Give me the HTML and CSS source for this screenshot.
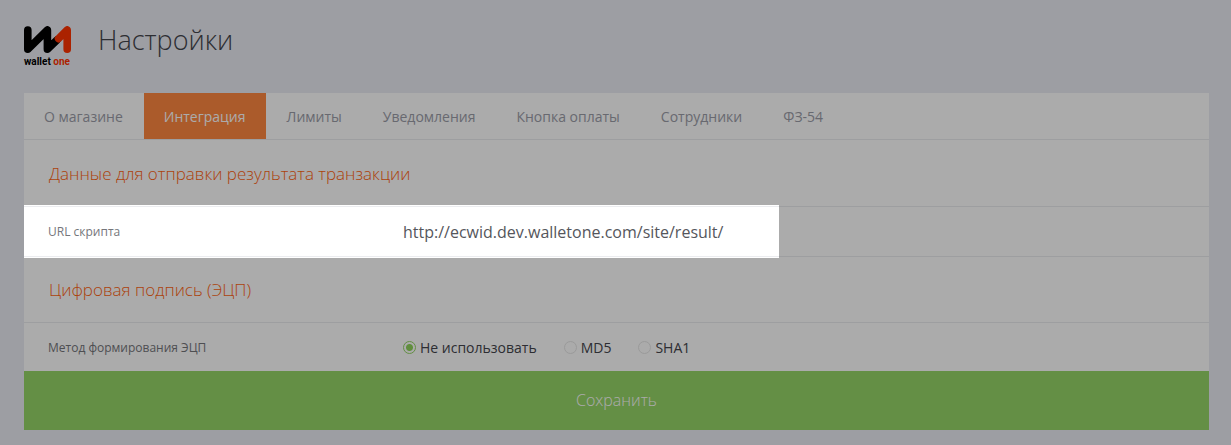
FILE: index.html
```
<!DOCTYPE html>
<html lang="ru">
<head>
  <meta charset="UTF-8">
  <meta name="viewport" content="width=device-width, initial-scale=1">
  <title>Настройки - Wallet One</title>
  <link rel="stylesheet" href="styles.css">
</head>
<body>

  <header class="header">
    <a href="#" class="logo">
      <svg width="47" height="28" viewBox="0 0 47 28" fill="none" stroke-width="7.6" stroke-linecap="round" stroke-linejoin="round" aria-hidden="true">
        <path d="M3.8 4V23.2L23.4 4V23.2L33 14" stroke="#000"/>
        <path d="M34.5 12.6L43.2 4V23.2" stroke="#ff3300"/>
      </svg>
      <span class="logo-text">wallet <span>one</span></span>
    </a>
    <h1>Настройки</h1>
  </header>

  <main class="panel">
    <nav class="tabs">
      <a href="#">О магазине</a>
      <a href="#" class="active">Интеграция</a>
      <a href="#">Лимиты</a>
      <a href="#">Уведомления</a>
      <a href="#">Кнопка оплаты</a>
      <a href="#">Сотрудники</a>
      <a href="#">ФЗ-54</a>
    </nav>

    <form>
      <h2>Данные для отправки результата транзакции</h2>
      <div class="row spotlight">
        <label class="row-label" for="script-url">URL скрипта</label>
        <input type="text" id="script-url" value="http://ecwid.dev.walletone.com/site/result/">
      </div>

      <h2>Цифровая подпись (ЭЦП)</h2>
      <div class="row" role="radiogroup" aria-labelledby="method-label">
        <span class="row-label" id="method-label">Метод формирования ЭЦП</span>
        <div class="options">
          <label><input type="radio" name="method" checked>Не использовать</label>
          <label><input type="radio" name="method">MD5</label>
          <label><input type="radio" name="method">SHA1</label>
        </div>
      </div>

      <button type="submit">Сохранить</button>
    </form>
  </main>

</body>
</html>
```

FILE: styles.css
```
* {
  box-sizing: border-box;
}

body {
  margin: 0;
  padding: 0 22px 15px 24px;
  background: #eaecf3;
  color: #44454c;
  font-family: "Open Sans", "Noto Sans", sans-serif;
  font-size: 14px;
}

.header {
  display: flex;
  align-items: flex-start;
  gap: 27px;
  padding: 20px 0 23px;
}

.logo {
  display: flex;
  flex-direction: column;
  width: 47px;
  padding-top: 6px;
  color: #000;
  text-decoration: none;
}

.logo-text {
  font-family: Roboto, sans-serif;
  font-size: 10px;
  font-weight: 700;
  line-height: 16px;
  white-space: nowrap;
}

.logo-text span {
  color: #ff3300;
}

h1 {
  margin: 0;
  font-size: 27px;
  font-weight: 300;
  line-height: 40px;
}

.panel {
  background: #fff;
}

.tabs {
  display: flex;
  gap: 1px;
  border-bottom: 1px solid #ebecef;
}

.tabs a {
  padding: 1px 20px 0;
  color: #9c9da8;
  line-height: 45px;
  text-decoration: none;
}

.tabs a.active {
  background: #ff8840;
  color: #fff;
  font-weight: 500;
}

form {
  padding-top: 1px;
}

h2 {
  margin: 0;
  padding: 0 25px;
  border-bottom: 1px solid #ebecef;
  color: #ff6412;
  font-size: 17px;
  font-weight: 300;
  line-height: 65px;
}

.row {
  display: flex;
  align-items: center;
  min-height: 48px;
  padding: 0 24px;
}

.row-label {
  flex: 0 0 355px;
  color: #75767b;
  font-size: 12px;
}

input[type="text"] {
  flex: 1;
  min-width: 0;
  padding: 0;
  border: none;
  background: none;
  color: #55565c;
  font-family: inherit;
  font-size: 16px;
  outline: none;
}

/* highlighted row, the shadow dims the rest of the page */
.spotlight {
  position: relative;
  min-height: 50px;
  border-bottom: 1px solid #ebecef;
}

.spotlight::after {
  content: "";
  position: absolute;
  top: -2px;
  bottom: -2px;
  left: 0;
  width: 755px;
  max-width: 100%;
  box-shadow: 0 0 0 200vmax rgba(0, 0, 0, 0.33);
  pointer-events: none;
}

.options {
  display: flex;
  gap: 27px;
}

.options label {
  display: flex;
  align-items: center;
  gap: 4px;
}

input[type="radio"] {
  appearance: none;
  width: 13px;
  height: 13px;
  margin: 0;
  border: 1px solid #e6e6e6;
  border-radius: 50%;
}

input[type="radio"]:checked {
  border-color: #95d567;
  background: radial-gradient(circle, #8fd45c 3px, transparent 4px);
}

button {
  display: block;
  width: 100%;
  padding: 0;
  border: none;
  background: #95d567;
  color: #fff;
  font-family: inherit;
  font-size: 16px;
  font-weight: 300;
  line-height: 59px;
  cursor: pointer;
}
```
